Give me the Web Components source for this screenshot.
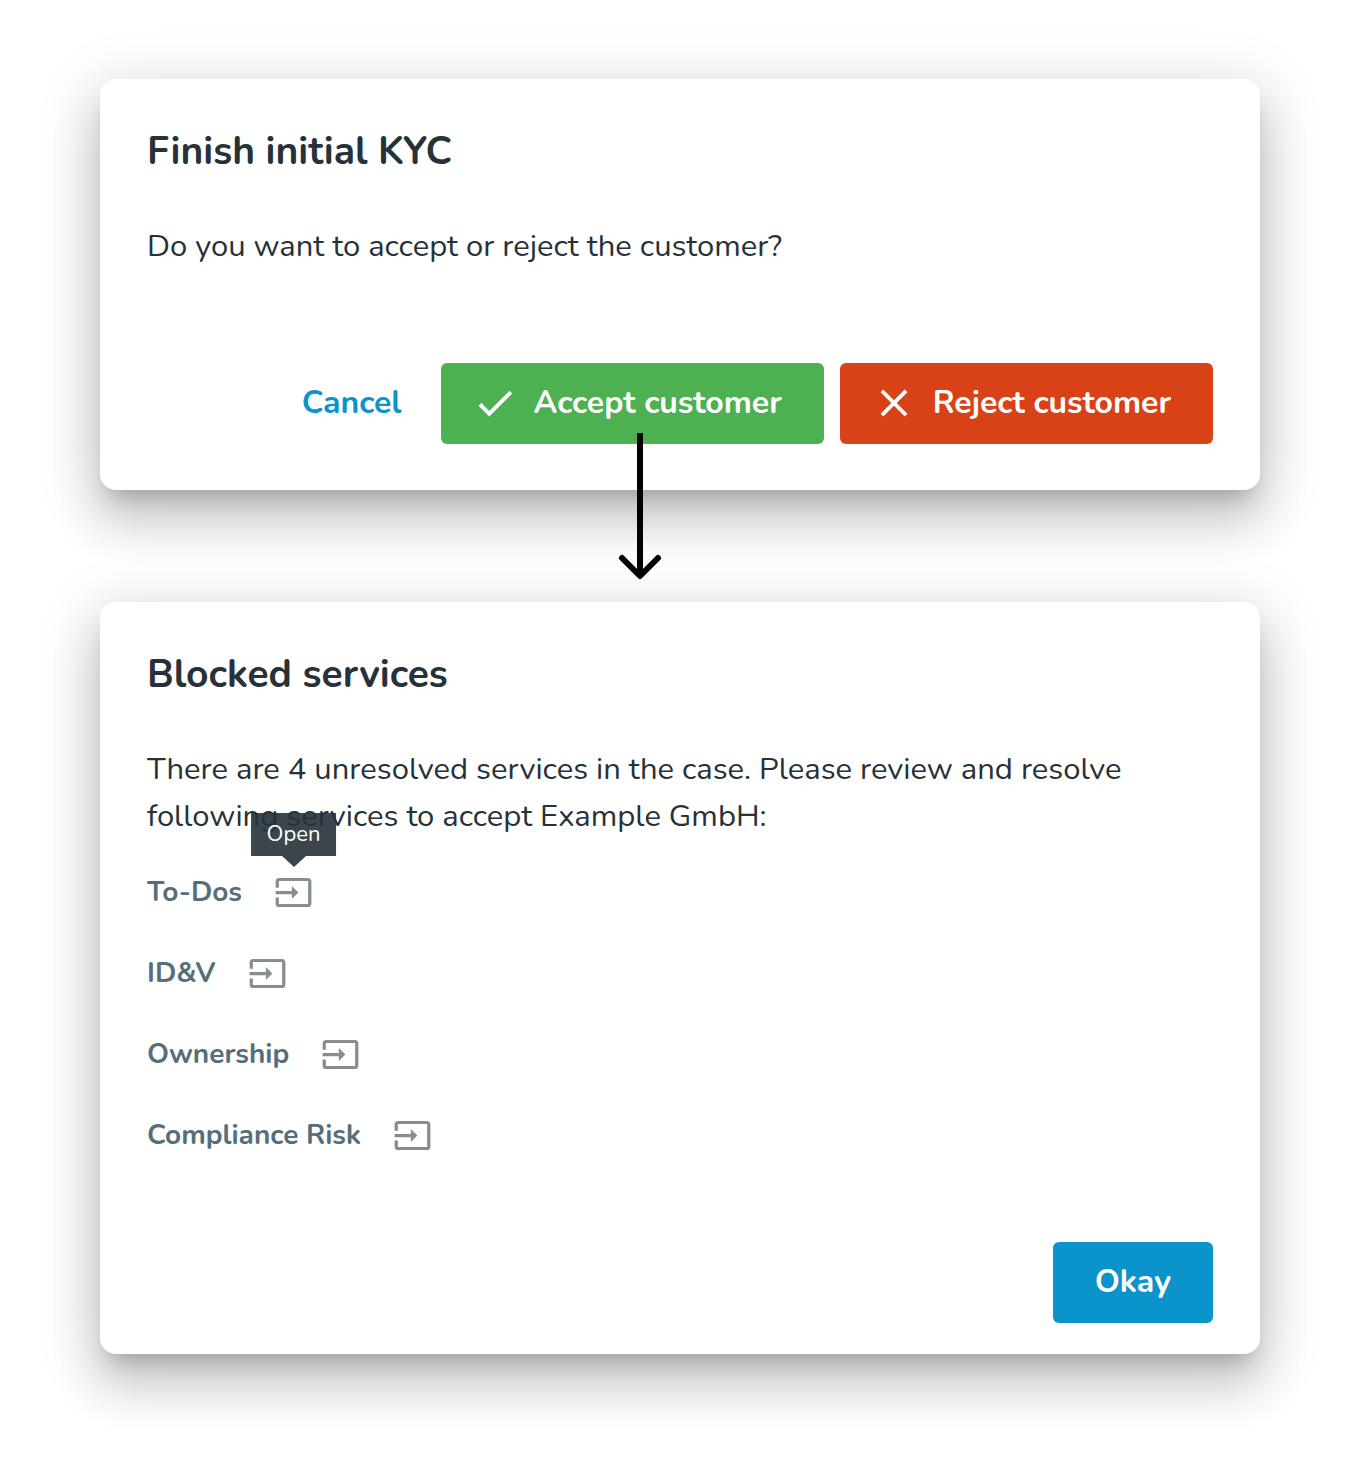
<!DOCTYPE html>
<html lang="en">
<head>
<meta charset="utf-8">
<meta name="viewport" content="width=device-width, initial-scale=1">
<title>Finish initial KYC</title>
<style>
  body {
    margin: 0;
    background: #fff;
    color: #263238;
    font-family: Nunito, Lato, "Open Sans", sans-serif;
    font-size: 31px;
    line-height: 47px;
  }
</style>
</head>
<body>
<kyc-flow>
  <dialog-card heading="Finish initial KYC">
    Do you want to accept or reject the customer?
    <action-button slot="actions" variant="text">Cancel</action-button>
    <action-button slot="actions" variant="accept" icon="check">Accept customer<flow-arrow slot="over"></flow-arrow></action-button>
    <action-button slot="actions" variant="reject" icon="close">Reject customer</action-button>
  </dialog-card>
  <dialog-card heading="Blocked services" compact>
    There are 4 unresolved services in the case. Please review and resolve following services to accept Example GmbH:
    <service-list slot="details">
      <service-item tooltip="Open">To-Dos</service-item>
      <service-item>ID&amp;V</service-item>
      <service-item>Ownership</service-item>
      <service-item>Compliance Risk</service-item>
    </service-list>
    <action-button slot="actions" variant="primary">Okay</action-button>
  </dialog-card>
</kyc-flow>

<script>
class BaseElement extends HTMLElement {
  render(html) {
    this.attachShadow({ mode: "open" }).innerHTML = html;
  }
}

customElements.define("kyc-flow", class extends BaseElement {
  connectedCallback() {
    this.render(`
      <style>
        :host { display: block; }
        main { display: flex; flex-direction: column; gap: 112px; padding: 79px 100px 108px; }
      </style>
      <main><slot></slot></main>`);
  }
});

customElements.define("dialog-card", class extends BaseElement {
  connectedCallback() {
    this.render(`
      <style>
        :host {
          display: block;
          padding: 47px 47px 46px;
          border-radius: 16px;
          background: #fff;
          box-shadow: 0 16px 20px -10px rgba(0,0,0,.2),
                      0 31px 47px 4px rgba(0,0,0,.14),
                      0 12px 58px 10px rgba(0,0,0,.12);
        }
        :host([compact]) { padding-bottom: 31px; }
        h2 { margin: 0 0 45px; font-size: 39px; line-height: 52px; font-weight: 700; }
        .body { margin: 0; }
        footer { display: flex; flex-wrap: wrap; justify-content: flex-end; gap: 16px; margin-top: 93px; }
        :host([compact]) footer { margin-top: 66px; }
      </style>
      <section aria-labelledby="title">
        <h2 id="title">${this.getAttribute("heading")}</h2>
        <p class="body"><slot></slot></p>
        <slot name="details"></slot>
        <footer><slot name="actions"></slot></footer>
      </section>`);
  }
});

const ICONS = {
  check: "M9 16.17 4.83 12l-1.42 1.41L9 19 21 7l-1.41-1.41z",
  close: "M19 6.41 17.59 5 12 10.59 6.41 5 5 6.41 10.59 12 5 17.59 6.41 19 12 13.41 17.59 19 19 17.59 13.41 12z"
};

customElements.define("action-button", class extends BaseElement {
  connectedCallback() {
    const icon = ICONS[this.getAttribute("icon")];
    this.render(`
      <style>
        :host { display: block; position: relative; }
        button {
          display: flex; align-items: center; gap: 16px;
          height: 81px; padding: 0 42px 2px;
          border: 0; border-radius: 6px;
          font: inherit; font-size: 32px; font-weight: 700; color: #fff;
          background: #0b93cb; cursor: pointer; white-space: nowrap;
        }
        svg { width: 46px; height: 46px; fill: currentColor; }
        :host([icon]) button { padding-left: 31px; }
        :host([variant="text"]) button { padding: 0 23px 2px; color: #0b93cb; background: none; }
        :host([variant="accept"]) button { background: #4eb151; }
        :host([variant="reject"]) button { background: #d94117; }
      </style>
      <button type="button">
        ${icon ? `<svg viewBox="0 0 24 24" aria-hidden="true"><path d="${icon}"/></svg>` : ""}
        <span><slot></slot></span>
      </button>
      <slot name="over"></slot>`);
  }
});

/* Arrow that leaves the button and points at the dialog it opens. */
customElements.define("flow-arrow", class extends BaseElement {
  connectedCallback() {
    this.render(`
      <style>
        :host { position: absolute; top: 70px; left: 52%; margin-left: -22px; z-index: 1; pointer-events: none; }
        svg { display: block; width: 44px; height: 147px; }
      </style>
      <svg viewBox="0 0 44 147" fill="none" stroke="#000" stroke-width="6" aria-hidden="true">
        <path d="M22 0V142"/>
        <path d="M4 125l18 18 18-18" stroke-linecap="round" stroke-linejoin="round"/>
      </svg>`);
  }
});

customElements.define("service-list", class extends BaseElement {
  connectedCallback() {
    this.setAttribute("role", "list");
    this.render(`
      <style>:host { display: flex; flex-direction: column; margin-top: 12px; }</style>
      <slot></slot>`);
  }
});

customElements.define("service-item", class extends BaseElement {
  connectedCallback() {
    const tip = this.getAttribute("tooltip");
    this.setAttribute("role", "listitem");
    this.render(`
      <style>
        :host { display: flex; align-items: center; gap: 11px; color: #546e7a; font-size: 28px; font-weight: 700; }
        .action { position: relative; }
        button { display: block; padding: 21px; border: 0; background: none; color: #868e90; cursor: pointer; }
        svg { display: block; width: 39px; height: 39px; fill: currentColor; }
        .tip {
          position: absolute; left: 50%; bottom: 77px; transform: translateX(-50%);
          padding: 0 16px; background: rgba(38,50,56,.9); color: #fff;
          font-size: 22px; line-height: 43px; font-weight: 400;
        }
        .tip::after {
          content: ""; position: absolute; top: 100%; left: 50%; margin-left: -12px;
          border: 12px solid transparent; border-bottom: 0; border-top: 11px solid rgba(38,50,56,.9);
        }
      </style>
      <span id="label"><slot></slot></span>
      <div class="action">
        <button type="button" aria-label="Open" aria-describedby="label">
          <svg viewBox="0 0 24 24" aria-hidden="true"><path d="M21 3.01H3c-1.1 0-2 .9-2 2V9h2V4.99h18v14.03H3V15H1v4.01c0 1.1.9 1.98 2 1.98h18c1.1 0 2-.88 2-1.98v-14c0-1.11-.9-2-2-2zM11 16l4-4-4-4v3H1v2h10v3z"/></svg>
        </button>
        ${tip ? `<div class="tip" role="tooltip">${tip}</div>` : ""}
      </div>`);
  }
});
</script>
</body>
</html>
